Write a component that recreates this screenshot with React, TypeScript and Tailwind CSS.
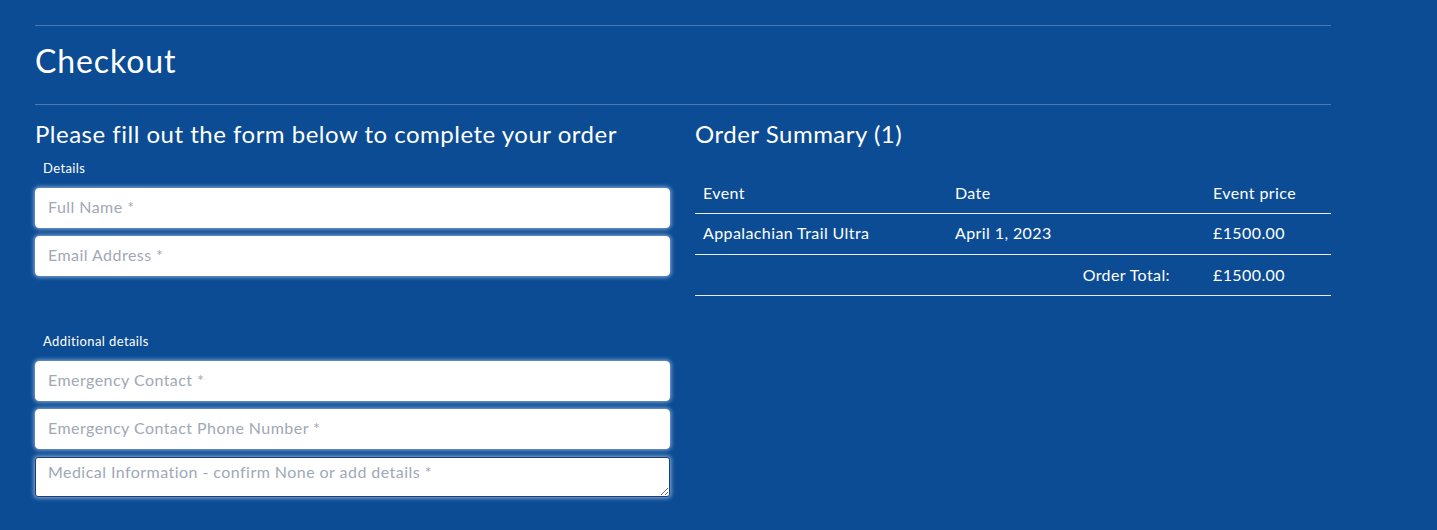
export default function App() {
  const inputCls =
    'block w-full h-[40px] rounded-[4px] border border-white bg-white px-[12px] pb-[4px] text-[16px] tracking-[0.45px] text-[#333] placeholder:text-[#9fa8b6] shadow-[0_0_4px_1px_rgba(190,210,240,0.75)] outline-none';

  return (
    <div className="min-h-screen w-full bg-[#0b4c94] text-white font-['Lato','Open_Sans',sans-serif] tracking-[0.4px]">
      <div className="w-[1296px] ml-[35px] pt-[25px]">
        <div className="border-t border-white/25" />
        <h1 className="pt-[15px] text-[32px] leading-[40px] font-normal tracking-[0.9px] mb-[23px]">Checkout</h1>
        <div className="border-t border-white/25" />

        <div className="grid grid-cols-[635px_636px] gap-[25px]">
          {/* Left: form */}
          <div>
            <h2 className="mt-[13px] text-[24px] leading-[32px] font-normal tracking-[0.5px]">
              Please fill out the form below to complete your order
            </h2>
            <div className="mt-[9px] pl-[8px] text-[13px] leading-[18px]">Details</div>
            <div className="mt-[11px] flex flex-col gap-[8px]">
              <input className={inputCls} placeholder="Full Name *" />
              <input className={inputCls} placeholder="Email Address *" />
            </div>

            <div className="mt-[56px] pl-[8px] text-[13px] leading-[18px]">Additional details</div>
            <div className="mt-[11px] flex flex-col gap-[8px]">
              <input className={inputCls} placeholder="Emergency Contact *" />
              <input className={inputCls} placeholder="Emergency Contact Phone Number *" />
              <textarea
                className="block w-full h-[40px] rounded-[3px] border border-[#1b3f73] bg-white px-[12px] pt-[3px] pb-[4px] text-[16px] leading-[22px] tracking-[0.45px] text-[#333] placeholder:text-[#9fa8b6] shadow-[0_0_4px_1px_rgba(190,210,240,0.75)] outline-none"
                placeholder="Medical Information - confirm None or add details *"
              />
            </div>
          </div>

          {/* Right: order summary */}
          <div>
            <h2 className="mt-[13px] text-[24px] leading-[32px] font-normal tracking-[0.5px]">Order Summary (1)</h2>
            <table className="mt-[23px] w-full border-collapse text-[16px] leading-[24px]">
              <thead>
                <tr className="border-b border-white/90">
                  <th className="w-[252px] px-[8px] py-[8px] text-left font-normal">Event</th>
                  <th className="w-[258px] px-[8px] py-[8px] text-left font-normal">Date</th>
                  <th className="px-[8px] py-[8px] text-left font-normal">Event price</th>
                </tr>
              </thead>
              <tbody>
                <tr className="border-b border-white/90">
                  <td className="px-[8px] pt-[7px] pb-[9px]">Appalachian Trail Ultra</td>
                  <td className="px-[8px] pt-[7px] pb-[9px]">April 1, 2023</td>
                  <td className="px-[8px] pt-[7px] pb-[9px]">£1500.00</td>
                </tr>
                <tr className="border-b border-white/90">
                  <td colSpan={2} className="pl-[8px] pr-[35px] py-[8px] text-right">Order Total:</td>
                  <td className="px-[8px] py-[8px]">£1500.00</td>
                </tr>
              </tbody>
            </table>
          </div>
        </div>
      </div>
    </div>
  );
}
